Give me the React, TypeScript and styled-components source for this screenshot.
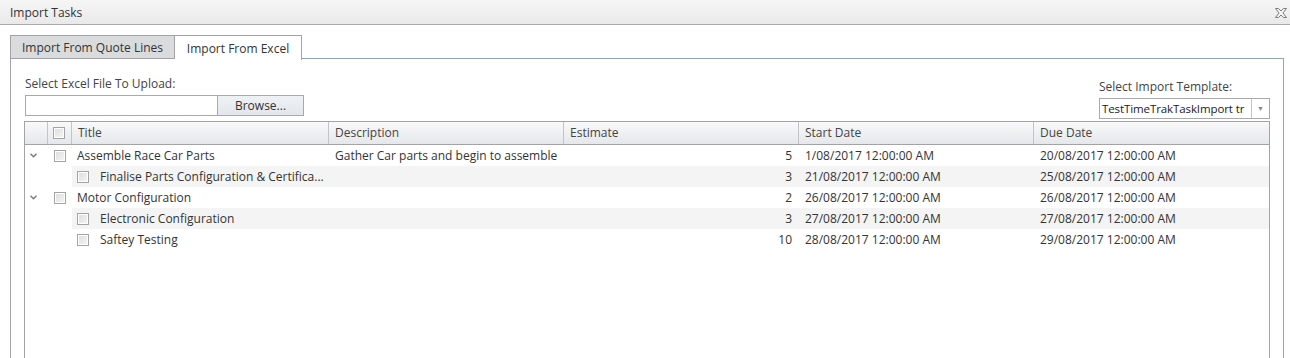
import React from "react";
import styled, { createGlobalStyle } from "styled-components";

const Global = createGlobalStyle`
  html, body { margin: 0; padding: 0; background: #fff; height: 358px; overflow: hidden; }
  body { font-family: "Open Sans", "Noto Sans", sans-serif; font-size: 12px; color: #333; }
`;

const Window = styled.div`
  width: 1290px;
  height: 358px;
  display: flex;
  flex-direction: column;
  overflow: hidden;
`;

const TitleBar = styled.div`
  height: 25px;
  box-sizing: border-box;
  border-bottom: 1px solid #a9a9ab;
  background: linear-gradient(#f6f6f6, #e9e9ea);
  display: flex;
  align-items: center;
  justify-content: space-between;
  padding: 0 3px 0 10px;
  font-size: 12px;
  color: #333;
`;

const CloseButton = styled.span`
  width: 12px;
  height: 10px;
  display: flex;
  margin-top: 1px;
`;

const Body = styled.div`
  flex: 1;
  display: flex;
  flex-direction: column;
  padding: 10px 6px 0 10px;
  min-height: 0;
`;

const TabStrip = styled.div`
  display: flex;
  height: 24px;
`;

const Tab = styled.div<{ $active?: boolean; $w: number }>`
  box-sizing: border-box;
  width: ${(p) => p.$w}px;
  height: ${(p) => (p.$active ? "25px" : "24px")};
  display: flex;
  align-items: center;
  justify-content: center;
  border: 1px solid #a3a3a5;
  border-bottom: ${(p) => (p.$active ? "none" : "1px solid #a3a3a5")};
  border-left: ${(p) => (p.$active ? "none" : "1px solid #a3a3a5")};
  background: ${(p) => (p.$active ? "#fff" : "#dadbdd")};
  color: #333;
  position: relative;
  z-index: 1;
`;

const TabFill = styled.div`
  flex: 1;
  border-bottom: 1px solid #8fa3bd;
`;

const Panel = styled.div`
  flex: 1;
  border-left: 1px solid #a3a3a5;
  border-right: 1px solid #a3a3a5;
  padding: 17px 13px 0 13px;
  display: flex;
  flex-direction: column;
  min-height: 0;
`;

const TopRow = styled.div`
  display: flex;
  justify-content: space-between;
  align-items: flex-end;
  padding-left: 1px;
`;

const FieldGroup = styled.div`
  display: flex;
  flex-direction: column;
  gap: 3px;
`;

const Label = styled.div`
  line-height: 16px;
  color: #444;
`;

const FileRow = styled.div`
  display: flex;
  height: 21px;
  margin-bottom: 3px;
`;

const FileInput = styled.div`
  width: 192px;
  box-sizing: border-box;
  border: 1px solid #a9a9ab;
  border-right: none;
  background: #fff;
`;

const BrowseButton = styled.div`
  width: 87px;
  box-sizing: border-box;
  border: 1px solid #a9a9ab;
  background: linear-gradient(#eef1f5, #e3e7ec);
  display: flex;
  align-items: center;
  justify-content: center;
  color: #333;
`;

const Select = styled.div`
  width: 171px;
  height: 21px;
  box-sizing: border-box;
  border: 1px solid #a9a9ab;
  display: flex;
  background: #fff;
`;

const SelectValue = styled.div`
  flex: 1;
  overflow: hidden;
  white-space: nowrap;
  padding-left: 2px;
  font-size: 11.5px;
  letter-spacing: -0.1px;
  line-height: 19px;
  color: #222;
`;

const SelectArrow = styled.div`
  width: 17px;
  flex: none;
  border-left: 1px solid #c4c4c6;
  display: flex;
  align-items: center;
  justify-content: center;
  color: #888;
  font-size: 7px;
`;

const Grid = styled.div`
  margin-top: 2px;
  flex: 1;
  border: 1px solid #a3a3a5;
  border-bottom: none;
  display: flex;
  flex-direction: column;
`;

const cols = "23px 24px 257px 235px 235px 235px 1fr";

const HeaderRow = styled.div`
  display: grid;
  grid-template-columns: ${cols};
  height: 23px;
  box-sizing: border-box;
  background: linear-gradient(#f9f9fa, #e5e7ea);
  border-bottom: 1px solid #a3a3a5;
`;

const HeaderCell = styled.div<{ $last?: boolean }>`
  display: flex;
  align-items: center;
  padding-left: 6px;
  padding-bottom: 1px;
  border-right: ${(p) => (p.$last ? "none" : "1px solid #c2c4c8")};
  color: #444;
  overflow: hidden;
  white-space: nowrap;
`;

const HeaderCheckCell = styled(HeaderCell)`
  padding-left: 5px;
`;

const Row = styled.div`
  display: grid;
  grid-template-columns: ${cols};
  height: 21px;
  align-items: center;
`;

const Cell = styled.div<{ $alt?: boolean; $right?: boolean; $pad?: number; $padR?: number }>`
  height: 100%;
  box-sizing: border-box;
  display: flex;
  align-items: center;
  justify-content: ${(p) => (p.$right ? "flex-end" : "flex-start")};
  padding-left: ${(p) => p.$pad ?? 6}px;
  padding-right: ${(p) => p.$padR ?? 7}px;
  background: ${(p) => (p.$alt ? "#f4f4f4" : "transparent")};
  white-space: nowrap;
  overflow: hidden;
  min-width: 0;
  color: #333;
  gap: 11px;
`;

const TitleText = styled.span`
  overflow: hidden;
  text-overflow: ellipsis;
  white-space: nowrap;
  min-width: 0;
`;

const Check = styled.span`
  width: 12px;
  height: 12px;
  flex: none;
  box-sizing: border-box;
  border: 1px solid #a4a4a6;
  background: linear-gradient(135deg, #dcdcdc, #f6f6f6);
  box-shadow: inset 0 0 0 1px #fff;
`;

const Expander = styled.span`
  display: flex;
  align-items: center;
  justify-content: center;
  width: 100%;
  height: 100%;
`;

type Task = {
  title: string;
  desc?: string;
  est: string;
  start: string;
  due: string;
  child?: boolean;
};

const tasks: Task[] = [
  { title: "Assemble Race Car Parts", desc: "Gather Car parts and begin to assemble", est: "5", start: "1/08/2017 12:00:00 AM", due: "20/08/2017 12:00:00 AM" },
  { title: "Finalise Parts Configuration & Certifica...", est: "3", start: "21/08/2017 12:00:00 AM", due: "25/08/2017 12:00:00 AM", child: true },
  { title: "Motor Configuration", est: "2", start: "26/08/2017 12:00:00 AM", due: "26/08/2017 12:00:00 AM" },
  { title: "Electronic Configuration", est: "3", start: "27/08/2017 12:00:00 AM", due: "27/08/2017 12:00:00 AM", child: true },
  { title: "Saftey Testing", est: "10", start: "28/08/2017 12:00:00 AM", due: "29/08/2017 12:00:00 AM", child: true },
];

const Chevron = () => (
  <svg width="7" height="5" viewBox="0 0 7 5">
    <polyline points="0.5,0.8 3.5,3.8 6.5,0.8" fill="none" stroke="#7a7a7a" strokeWidth="1.4" />
  </svg>
);

const CloseIcon = () => (
  <svg width="12" height="10" viewBox="0 0 12 10">
    <path
      d="M0.5,0.5 H3.5 L6,3 L8.5,0.5 H11.5 L8,5 L11.5,9.5 H8.5 L6,7 L3.5,9.5 H0.5 L4,5 Z"
      fill="#f4f4f4"
      stroke="#7b7b7b"
      strokeWidth="1"
    />
  </svg>
);

export default function App() {
  return (
    <Window>
      <Global />
      <TitleBar>
        <span>Import Tasks</span>
        <CloseButton>
          <CloseIcon />
        </CloseButton>
      </TitleBar>
      <Body>
        <TabStrip>
          <Tab $w={165}>Import From Quote Lines</Tab>
          <Tab $w={127} $active>
            Import From Excel
          </Tab>
          <TabFill />
        </TabStrip>
        <Panel>
          <TopRow>
            <FieldGroup>
              <Label>Select Excel File To Upload:</Label>
              <FileRow>
                <FileInput />
                <BrowseButton>Browse...</BrowseButton>
              </FileRow>
            </FieldGroup>
            <FieldGroup>
              <Label>Select Import Template:</Label>
              <Select>
                <SelectValue>TestTimeTrakTaskImport tr</SelectValue>
                <SelectArrow>▼</SelectArrow>
              </Select>
            </FieldGroup>
          </TopRow>
          <Grid>
            <HeaderRow>
              <HeaderCell />
              <HeaderCheckCell>
                <Check />
              </HeaderCheckCell>
              <HeaderCell>Title</HeaderCell>
              <HeaderCell>Description</HeaderCell>
              <HeaderCell>Estimate</HeaderCell>
              <HeaderCell>Start Date</HeaderCell>
              <HeaderCell $last>Due Date</HeaderCell>
            </HeaderRow>
            {tasks.map((t, i) => {
              const alt = i % 2 === 1;
              return (
                <Row key={i}>
                  <Cell $pad={0}>
                    {!t.child && (
                      <Expander>
                        <Chevron />
                      </Expander>
                    )}
                  </Cell>
                  <Cell $pad={6}>{!t.child && <Check />}</Cell>
                  <Cell $alt={alt} $pad={5} $padR={1}>
                    {t.child && <Check />}
                    <TitleText>{t.title}</TitleText>
                  </Cell>
                  <Cell $alt={alt}>{t.desc}</Cell>
                  <Cell $alt={alt} $right>
                    {t.est}
                  </Cell>
                  <Cell $alt={alt}>{t.start}</Cell>
                  <Cell $alt={alt}>{t.due}</Cell>
                </Row>
              );
            })}
          </Grid>
        </Panel>
      </Body>
    </Window>
  );
}
